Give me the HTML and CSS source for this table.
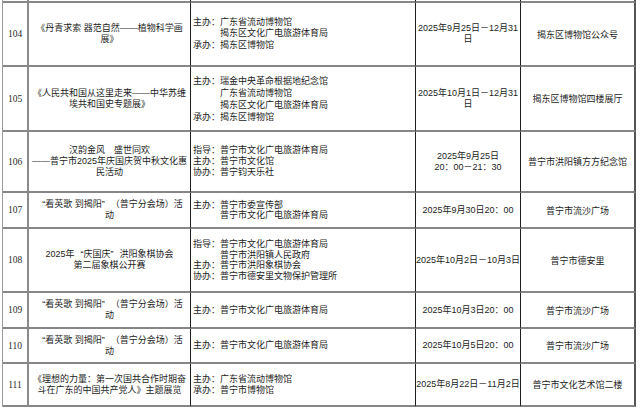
FILE: index.html
```html
<!DOCTYPE html>
<html lang="zh-CN">
<head>
<meta charset="utf-8">
<title>活动安排表</title>
<link rel="stylesheet" href="styles.css">
</head>
<body>
<table class="sched">
  <tr class="cut"><td class="c1"></td><td class="c2"></td><td class="c3"></td><td class="c4"></td><td class="c5"></td></tr>
  <tr class="h64">
    <td class="c1">104</td>
    <td class="c2">《丹青求索 器范自然——植物科学画<br>展》</td>
    <td class="c3 lh115"><div>主办：广东省流动博物馆</div><div class="cont">揭东区文化广电旅游体育局</div><div>承办：揭东区博物馆</div></td>
    <td class="c4">2025年9月25日－12月31<br>日</td>
    <td class="c5">揭东区博物馆公众号</td>
  </tr>
  <tr class="h65">
    <td class="c1">105</td>
    <td class="c2 lh10">《人民共和国从这里走来——中华苏维<br>埃共和国史专题展》</td>
    <td class="c3 lh12"><div>主办：瑞金中央革命根据地纪念馆</div><div class="cont">广东省流动博物馆</div><div class="cont">揭东区文化广电旅游体育局</div><div>承办：揭东区博物馆</div></td>
    <td class="c4">2025年10月1日－12月31<br>日</td>
    <td class="c5">揭东区博物馆四楼展厅</td>
  </tr>
  <tr class="h61">
    <td class="c1">106</td>
    <td class="c2">汉韵金风　盛世同欢<br>——普宁市2025年庆国庆贺中秋文化惠<br>民活动</td>
    <td class="c3"><div>指导：普宁市文化广电旅游体育局</div><div>主办：普宁市文化馆</div><div>协办：普宁钧天乐社</div></td>
    <td class="c4">2025年9月25日<br>20：00－21：30</td>
    <td class="c5">普宁市洪阳镇方方纪念馆</td>
  </tr>
  <tr class="h36">
    <td class="c1">107</td>
    <td class="c2"><span class="qo">“</span>看英歌 到揭阳<span class="qc">”</span>（普宁分会场）活<br>动</td>
    <td class="c3 lh10"><div>主办：普宁市委宣传部</div><div class="cont">普宁市文化广电旅游体育局</div></td>
    <td class="c4">2025年9月30日20：00</td>
    <td class="c5">普宁市流沙广场</td>
  </tr>
  <tr class="h64">
    <td class="c1">108</td>
    <td class="c2">2025年<span class="qo">“</span>庆国庆<span class="qc">”</span>洪阳象棋协会<br>第二届象棋公开赛</td>
    <td class="c3 lh10"><div>指导：普宁市文化广电旅游体育局</div><div class="cont">普宁市洪阳镇人民政府</div><div>主办：普宁市洪阳象棋协会</div><div>协办：普宁市德安里文物保护管理所</div></td>
    <td class="c4">2025年10月2日－10月3日</td>
    <td class="c5">普宁市德安里</td>
  </tr>
  <tr class="h36">
    <td class="c1">109</td>
    <td class="c2"><span class="qo">“</span>看英歌 到揭阳<span class="qc">”</span>（普宁分会场）活<br>动</td>
    <td class="c3"><div>主办：普宁市文化广电旅游体育局</div></td>
    <td class="c4">2025年10月3日20：00</td>
    <td class="c5">普宁市流沙广场</td>
  </tr>
  <tr class="h35">
    <td class="c1">110</td>
    <td class="c2"><span class="qo">“</span>看英歌 到揭阳<span class="qc">”</span>（普宁分会场）活<br>动</td>
    <td class="c3"><div>主办：普宁市文化广电旅游体育局</div></td>
    <td class="c4">2025年10月5日20：00</td>
    <td class="c5">普宁市流沙广场</td>
  </tr>
  <tr class="h43">
    <td class="c1">111</td>
    <td class="c2 lh10">《理想的力量：第一次国共合作时期奋<br>斗在广东的中国共产党人》主题展览</td>
    <td class="c3 lh10"><div>主办：广东省流动博物馆</div><div>承办：普宁市博物馆</div></td>
    <td class="c4">2025年8月22日－11月2日</td>
    <td class="c5">普宁市文化艺术馆二楼</td>
  </tr>
</table>
</body>
</html>
```

FILE: styles.css
```css
html, body {
  margin: 0;
  padding: 0;
  background: #ffffff;
}

body {
  padding-left: 2px;
  font-family: "Liberation Sans", "Noto Sans CJK SC", sans-serif;
  font-size: 9px;
  color: #1c1c1c;
}

.sched {
  border-collapse: separate;
  border-spacing: 0;
  table-layout: fixed;
  width: 634px;
  border-left: 1px solid #9a9a9a;
}

.sched td {
  box-sizing: border-box;
  padding: 0;
  vertical-align: middle;
  border-bottom: 2px solid #868686;
  border-right: 1px solid #1e1e1e;
  white-space: nowrap;
  overflow: hidden;
}

.cut td { height: 3px; }
.h64 td { height: 64px; }
.h65 td { height: 65px; }
.h61 td { height: 61px; }
.h36 td { height: 36px; }
.h35 td { height: 35px; }
.h43 td { height: 43px; }

.sched .c1 {
  width: 26px;
  border-right: 2px solid #8a8a8a;
  text-align: center;
  font-family: "Liberation Serif", serif;
  font-size: 9.5px;
  color: #2a2a2a;
}

.c2 {
  width: 162px;
  text-align: center;
  line-height: 11px;
}

.qo,
.qc {
  display: inline-block;
  width: 9px;
}

.qo { text-align: right; }
.qc { text-align: left; }

.c3 {
  width: 225px;
  text-align: left;
  line-height: 11px;
}

.sched .c3 { padding-left: 2px; }

.c3 .cont { padding-left: 27px; }

.c4 {
  width: 105px;
  text-align: center;
  line-height: 11px;
}

.sched .c5 {
  width: 115px;
  border-right: 2px solid #555555;
  text-align: center;
}

.sched .lh10 { line-height: 10.5px; }
.sched .lh115 { line-height: 11.5px; }
.sched .lh12 { line-height: 12px; }
```
